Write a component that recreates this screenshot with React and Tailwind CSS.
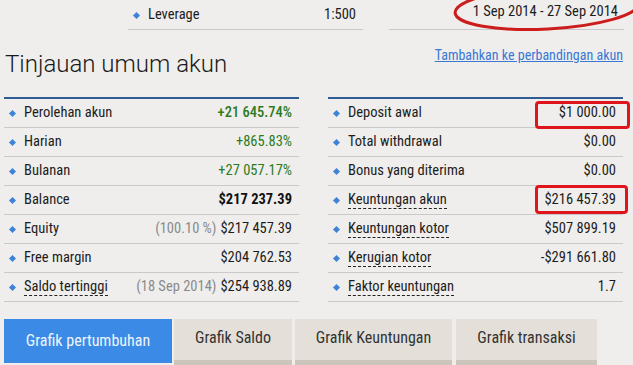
import React from "react";

const font = { fontFamily: '"Roboto Condensed", Roboto, "Liberation Sans", sans-serif' };

function Diamond() {
  return <span className="inline-block w-[5px] h-[5px] rotate-45 bg-[#3f83d9] ml-[6px] mr-[9px] shrink-0" />;
}

function Row({ label, value, prefix, dashed, valueClass }) {
  return (
    <div className="flex items-center h-[29px] border-b border-[#c9c9c9] pr-[7px] text-[14.5px] text-[#1c1c1c]">
      <Diamond />
      <span className={dashed ? "border-b border-dashed border-[#222] leading-[16px]" : "leading-[16px]"}>{label}</span>
      <span className="ml-auto flex items-center gap-[4px]">
        {prefix && <span className="text-[#8a8a8a]">{prefix}</span>}
        <span className={valueClass || "text-[#1c1c1c]"}>{value}</span>
      </span>
    </div>
  );
}

const left = [
  { label: "Perolehan akun", value: "+21 645.74%", valueClass: "text-[#2c7a21] font-medium" },
  { label: "Harian", value: "+865.83%", valueClass: "text-[#2c7a21]" },
  { label: "Bulanan", value: "+27 057.17%", valueClass: "text-[#2c7a21]" },
  { label: "Balance", value: "$217 237.39", valueClass: "text-[#111] font-bold" },
  { label: "Equity", value: "$217 457.39", prefix: "(100.10 %)" },
  { label: "Free margin", value: "$204 762.53" },
  { label: "Saldo tertinggi", value: "$254 938.89", prefix: "(18 Sep 2014)", dashed: true },
];

const right = [
  { label: "Deposit awal", value: "$1 000.00" },
  { label: "Total withdrawal", value: "$0.00" },
  { label: "Bonus yang diterima", value: "$0.00" },
  { label: "Keuntungan akun", value: "$216 457.39", dashed: true },
  { label: "Keuntungan kotor", value: "$507 899.19", dashed: true },
  { label: "Kerugian kotor", value: "-$291 661.80", dashed: true },
  { label: "Faktor keuntungan", value: "1.7", dashed: true },
];

export default function App() {
  return (
    <div className="relative w-[633px] h-[365px] overflow-hidden bg-[#efeeec]" style={font}>
      {/* top row */}
      <div className="flex pl-[128px] gap-[26px]">
        <div className="w-[235px] h-[30px] flex items-center pt-[1px] border-b border-[#c9c9c9] pr-[7px] text-[14.5px] text-[#1c1c1c]">
          <Diamond />
          <span>Leverage</span>
          <span className="ml-auto">1:500</span>
        </div>
        <div className="w-[235px] h-[30px] flex items-start justify-end pt-[1px] border-b border-[#c9c9c9] pr-[6px] text-[14.5px] text-[#1c1c1c]">
          1 Sep 2014 - 27 Sep 2014
        </div>
      </div>

      {/* title row */}
      <div className="flex items-start justify-between pl-[5px] pr-[10px] mt-[16px] h-[51px]">
        <h1 className="text-[24px] leading-[30px] mt-[3px] font-light text-[#1a1a1a]" style={{ fontFamily: 'Roboto, "Liberation Sans", sans-serif' }}>
          Tinjauan umum akun
        </h1>
        <a className="text-[14px] leading-[18px] mt-[0px] text-[#3a78d4] underline">Tambahkan ke perbandingan akun</a>
      </div>

      {/* tables */}
      <div className="flex pl-[4px] gap-[29px]">
        <div className="w-[295px] border-t-2 border-[#2f5d93]">
          {left.map((r) => (
            <Row key={r.label} {...r} />
          ))}
        </div>
        <div className="w-[295px] border-t-2 border-[#2f5d93]">
          {right.map((r) => (
            <Row key={r.label} {...r} />
          ))}
        </div>
      </div>

      {/* tabs */}
      <div className="flex mt-[17px] text-[16px]">
        <div className="ml-[4px] w-[168px] h-[44px] flex items-center justify-center bg-[#3b8be6] text-[#eef4fd]">
          Grafik pertumbuhan
        </div>
        <div className="ml-[2px] w-[118px] h-[47px] flex items-center justify-center pb-[4px] bg-[#e4e0d9] border-b-[6px] border-[#cbc5bc] text-[#333]">
          Grafik Saldo
        </div>
        <div className="ml-[3px] w-[157px] h-[47px] flex items-center justify-center pb-[4px] bg-[#e4e0d9] border-b-[6px] border-[#cbc5bc] text-[#333]">
          Grafik Keuntungan
        </div>
        <div className="ml-[4px] w-[141px] h-[47px] flex items-center justify-center pb-[4px] bg-[#e4e0d9] border-b-[6px] border-[#cbc5bc] text-[#333]">
          Grafik transaksi
        </div>
      </div>

      {/* annotations */}
      <svg className="absolute left-0 top-0 pointer-events-none" width="633" height="60">
        <ellipse cx="547" cy="8" rx="92" ry="21" fill="none" stroke="#cc1c1c" strokeWidth="3" transform="rotate(-3 547 8)" />
      </svg>
      <div className="absolute left-[535px] top-[101px] w-[95px] h-[28px] border-[3px] border-[#e0141b] rounded-[4px]" />
      <div className="absolute left-[535px] top-[185px] w-[93px] h-[29px] border-[3px] border-[#e0141b] rounded-[4px]" />
    </div>
  );
}
